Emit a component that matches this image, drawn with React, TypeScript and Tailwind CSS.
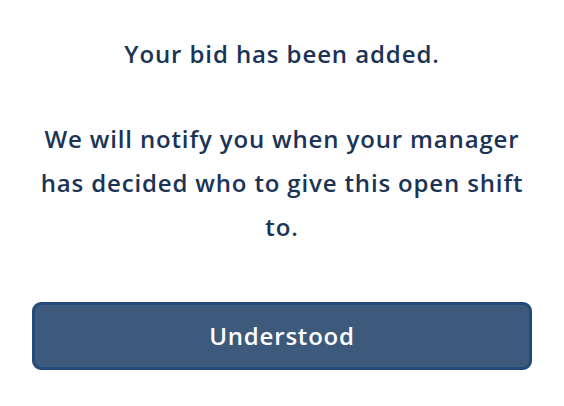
export default function App() {
  return (
    <div
      className="flex h-[406px] w-[564px] flex-col items-center bg-white px-8 pt-[32px] text-[#1b3456]"
      style={{ fontFamily: "'Open Sans', 'Noto Sans', sans-serif" }}
    >
      <p className="text-center text-[24px] font-semibold leading-[44px] tracking-[0.9px]">
        Your bid has been added.
      </p>
      <p className="mt-[41px] text-center text-[24px] font-semibold leading-[44px] tracking-[0.85px]">
        We will notify you when your manager
        <br />
        has decided who to give this open shift
        <br />
        to.
      </p>
      <button className="mt-[53px] flex h-[68px] w-full shrink-0 items-center justify-center rounded-[9px] border-[3px] border-[#244a78] bg-[#3d5a7c] text-[24px] font-semibold tracking-[0.8px] text-white">
        Understood
      </button>
    </div>
  );
}
